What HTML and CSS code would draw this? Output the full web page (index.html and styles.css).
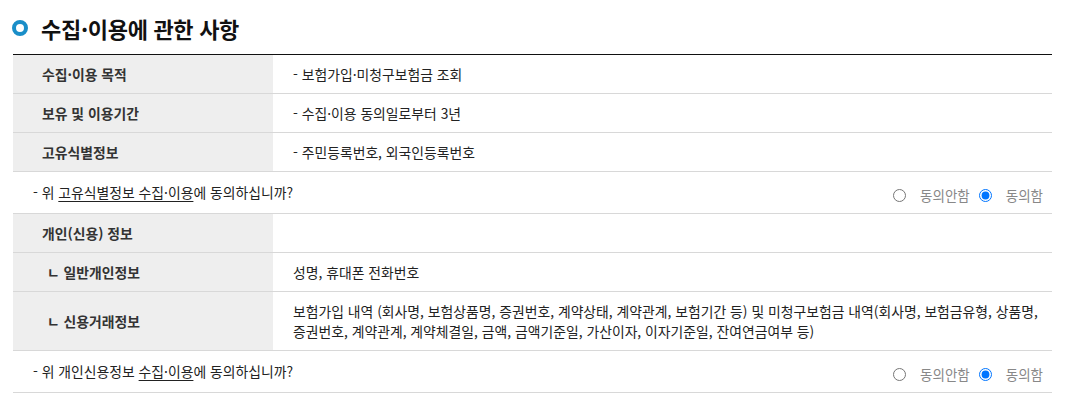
FILE: index.html
```html
<!DOCTYPE html>
<html lang="ko">
<head>
<meta charset="utf-8">
<link rel="stylesheet" href="styles.css">
</head>
<body>
<div class="wrap">
  <h2 class="title"><span class="ring"></span>수집·이용에 관한 사항</h2>
  <table class="info">
    <colgroup><col class="c-head"><col></colgroup>
    <tbody>
      <tr><th>수집·이용 목적</th><td>- 보험가입·미청구보험금 조회</td></tr>
      <tr><th>보유 및 이용기간</th><td>- 수집·이용 동의일로부터 3년</td></tr>
      <tr><th>고유식별정보</th><td>- 주민등록번호, 외국인등록번호</td></tr>
      <tr class="consent"><td colspan="2">
        <div class="consent-row">
          <span class="q">- 위 <u>고유식별정보 수집·이용</u>에 동의하십니까?</span>
          <span class="opts">
            <label><input type="radio" name="a1">동의안함</label>
            <label><input type="radio" name="a1" checked>동의함</label>
          </span>
        </div>
      </td></tr>
      <tr><th>개인(신용) 정보</th><td></td></tr>
      <tr><th class="sub">ㄴ 일반개인정보</th><td>성명, 휴대폰 전화번호</td></tr>
      <tr><th class="sub">ㄴ 신용거래정보</th><td>보험가입 내역 (회사명, 보험상품명, 증권번호, 계약상태, 계약관계, 보험기간 등) 및 미청구보험금 내역(회사명, 보험금유형, 상품명, 증권번호, 계약관계, 계약체결일, 금액, 금액기준일, 가산이자, 이자기준일, 잔여연금여부 등)</td></tr>
      <tr class="consent"><td colspan="2">
        <div class="consent-row">
          <span class="q">- 위 개인신용정보 <u>수집·이용</u>에 동의하십니까?</span>
          <span class="opts">
            <label><input type="radio" name="a2">동의안함</label>
            <label><input type="radio" name="a2" checked>동의함</label>
          </span>
        </div>
      </td></tr>
    </tbody>
  </table>
</div>
</body>
</html>
```
FILE: styles.css
```css
html, body {
  margin: 0;
  padding: 0;
  background: #fff;
}
body {
  font-family: "Noto Sans CJK KR", "Noto Sans", sans-serif;
  color: #222;
}
.wrap {
  padding: 0 18px 0 13px;
}
.title {
  display: flex;
  align-items: center;
  margin: 0;
  padding-top: 13px;
  height: 30px;
  margin-bottom: 11px;
  font-size: 22px;
  font-weight: 700;
  line-height: 30px;
  color: #111;
  letter-spacing: -0.3px;
}
.ring {
  width: 16px;
  height: 16px;
  box-sizing: border-box;
  border: 4px solid #1a8ec8;
  border-radius: 50%;
  margin-left: -1px;
  margin-right: 13px;
  flex: none;
}
.info {
  width: 100%;
  border-collapse: collapse;
  border-top: 1px solid #111;
  font-size: 13.85px;
  line-height: 20px;
}
.c-head {
  width: 260px;
}
.info th, .info td {
  border-bottom: 1px solid #d8d8d8;
  padding: 9px 10px 9px 20px;
  text-align: left;
  vertical-align: middle;
}
.info th {
  background: #eeeeee;
  font-weight: 700;
  color: #333;
  padding-left: 29px;
}
.info th.sub {
  padding-left: 34px;
}
.info td {
  color: #222;
}
.consent td {
  padding: 10px 9px 11px 20px;
}
.consent-row {
  display: flex;
  justify-content: space-between;
  align-items: center;
}
.consent-row u {
  text-underline-offset: 3px;
}
.opts {
  display: flex;
  align-items: center;
  color: #888;
  font-size: 13.5px;
  height: 20px;
  padding-top: 3px;
  margin-bottom: -3px;
}
.opts label {
  display: flex;
  align-items: center;
}
.opts input {
  margin: 0 14px 0 0;
  width: 13px;
  height: 13px;
}
.opts label:first-child {
  margin-right: 9px;
}
```
